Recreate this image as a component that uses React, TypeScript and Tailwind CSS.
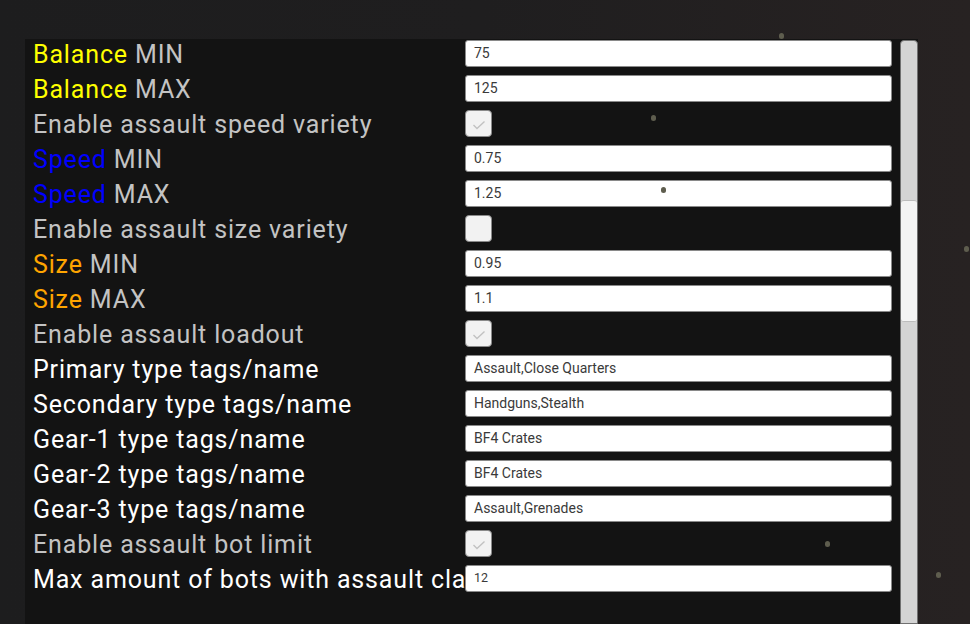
import React from "react";

type Row =
  | { kind: "input"; label: React.ReactNode; value: string; small?: boolean }
  | { kind: "check"; label: React.ReactNode; checked: boolean };

const G = ({ children }: { children: React.ReactNode }) => (
  <span className="text-[#c3c3c3]">{children}</span>
);

const rows: Row[] = [
  { kind: "input", label: <><span className="text-[#ffff00]">Balance</span> <G>MIN</G></>, value: "75" },
  { kind: "input", label: <><span className="text-[#ffff00]">Balance</span> <G>MAX</G></>, value: "125" },
  { kind: "check", label: <G>Enable assault speed variety</G>, checked: true },
  { kind: "input", label: <><span className="text-[#0000ff]">Speed</span> <G>MIN</G></>, value: "0.75" },
  { kind: "input", label: <><span className="text-[#0000ff]">Speed</span> <G>MAX</G></>, value: "1.25" },
  { kind: "check", label: <G>Enable assault size variety</G>, checked: false },
  { kind: "input", label: <><span className="text-[#ffa500]">Size</span> <G>MIN</G></>, value: "0.95" },
  { kind: "input", label: <><span className="text-[#ffa500]">Size</span> <G>MAX</G></>, value: "1.1" },
  { kind: "check", label: <G>Enable assault loadout</G>, checked: true },
  { kind: "input", label: <span className="text-white">Primary type tags/name</span>, value: "Assault,Close Quarters" },
  { kind: "input", label: <span className="text-white">Secondary type tags/name</span>, value: "Handguns,Stealth" },
  { kind: "input", label: <span className="text-white">Gear-1 type tags/name</span>, value: "BF4 Crates" },
  { kind: "input", label: <span className="text-white">Gear-2 type tags/name</span>, value: "BF4 Crates" },
  { kind: "input", label: <span className="text-white">Gear-3 type tags/name</span>, value: "Assault,Grenades" },
  { kind: "check", label: <G>Enable assault bot limit</G>, checked: true },
  { kind: "input", label: <span className="text-white">Max amount of bots with assault class</span>, value: "12", small: true },
];

const dots = [
  { x: 779, y: 33 },
  { x: 651, y: 115 },
  { x: 661, y: 187 },
  { x: 964, y: 246 },
  { x: 825, y: 541 },
  { x: 936, y: 572 },
];

export default function App() {
  return (
    <div
      className="relative w-[970px] h-[624px] overflow-hidden bg-gradient-to-r from-[#1d1d1e] via-[#1f1e1f] to-[#272222] pt-[39px] pl-[25px]"
      style={{ fontFamily: "Roboto, 'Noto Sans', sans-serif" }}
    >
      <div className="flex h-full w-[893px] bg-[#131313]">
        <div className="flex flex-col gap-[8px] w-[875px] pl-[8px] pt-[1px]">
          {rows.map((r, i) => (
            <div key={i} className="flex items-center h-[27px]">
              <div className="w-[432px] mt-[2px] overflow-hidden whitespace-nowrap text-[25px] tracking-[0.85px] leading-[27px]">
                {r.label}
              </div>
              {r.kind === "input" ? (
                <div className="w-[427px] h-[27px] rounded-[3px] bg-white border border-[#8a8a8a] flex items-center pl-[8px]">
                  <span className={`${r.small ? "text-[12.5px]" : "text-[14px]"} text-[#3a3a3a]`}>{r.value}</span>
                </div>
              ) : (
                <div className="w-[27px] h-[27px] rounded-[4px] bg-[#f2f2f2] border border-[#8a8a8a] flex items-center justify-center">
                  {r.checked && (
                    <svg width="14" height="10" viewBox="0 0 14 10" className="mt-[2px]">
                      <polyline points="1.5,5 5,8.5 12.5,1.5" fill="none" stroke="#c2c2c2" strokeWidth="1.4" />
                    </svg>
                  )}
                </div>
              )}
            </div>
          ))}
        </div>
        <div className="w-[18px] h-full pt-[1px]">
          <div className="flex flex-col h-full w-[18px] bg-[#d4d4d4] border border-[#707070] rounded-t-[4px]">
            <div className="h-[159px]" />
            <div className="h-[122px] bg-[#f4f4f4] rounded-[3px] border-y border-[#bcbcbc]" />
          </div>
        </div>
      </div>
      {dots.map((d, i) => (
        <div
          key={i}
          className="absolute w-[5px] h-[6px] rounded-full bg-[#5e5d4e]"
          style={{ left: d.x, top: d.y }}
        />
      ))}
    </div>
  );
}
